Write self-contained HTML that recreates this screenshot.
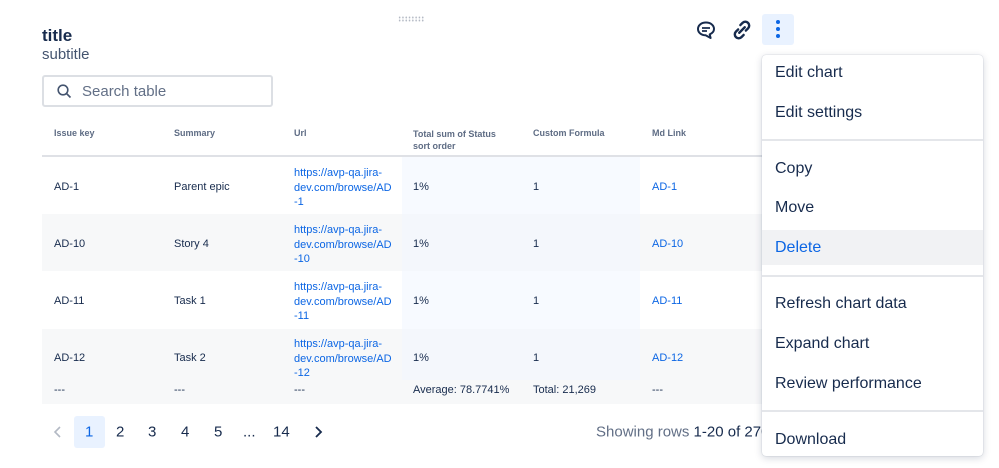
<!DOCTYPE html>
<html><head><style>
*{box-sizing:border-box;margin:0;padding:0}
body{width:999px;height:468px;overflow:hidden;background:#fff;font-family:"Liberation Sans",sans-serif;color:#172b4d;position:relative}
.abs{position:absolute}
.t{font-size:11px;color:#172b4d}
.h{font-size:9px;color:#5e6c84;font-weight:bold}
.link{color:#0c66e4}
.row{position:absolute;left:42px;width:740px}
.menu{position:absolute;left:762px;top:55px;width:221px;height:401px;background:#fff;border-radius:4px;box-shadow:0 2px 8px rgba(9,30,66,.18),0 0 1px rgba(9,30,66,.3)}
.mi{position:absolute;left:13px;font-size:16px;color:#172b4d}
.div{position:absolute;left:0;right:0;height:2px;background:#e4e6ea}
.pg{position:absolute;top:432px;font-size:15px;color:#172b4d;transform:translateY(-50%)}
</style></head><body>
<div class="abs" style="left:398px;top:16px;width:26px;height:6px;background-image:radial-gradient(circle,#b3b9c4 0.8px,transparent 1px);background-size:3.3px 3px"></div>
<div class="abs" style="left:42px;top:26px;font-size:17px;font-weight:bold">title</div>
<div class="abs" style="left:42px;top:46px;font-size:15px;color:#44546f">subtitle</div>
<div class="abs" style="left:42px;top:75px;width:231px;height:32px;border:2px solid #dcdfe4;border-radius:3px"></div>
<svg class="abs" style="left:57px;top:84px" width="15" height="15" viewBox="0 0 15 15"><circle cx="6" cy="6" r="4.8" fill="none" stroke="#44546f" stroke-width="1.6"/><path d="M9.5 9.5L13.5 13.5" stroke="#44546f" stroke-width="1.6"/></svg>
<div class="abs" style="left:82px;top:83px;font-size:15px;color:#626f86">Search table</div>

<div class="abs" style="left:402px;top:157px;width:238px;height:223px;background:#f7faff"></div>
<div class="row" style="top:214px;height:57px;background:#f7f8f9"></div>
<div class="row" style="top:329px;height:51px;background:#f7f8f9"></div>
<div class="row" style="top:380px;height:24px;background:#f7f8f9"></div>
<div class="abs" style="left:402px;top:214px;width:238px;height:57px;background:#f4f7fc"></div>
<div class="abs" style="left:402px;top:329px;width:238px;height:51px;background:#f4f7fc"></div>
<div class="row" style="top:155px;height:2px;background:#dfe1e6"></div>

<div class="abs h" style="left:54px;top:128px">Issue key</div>
<div class="abs h" style="left:174px;top:128px">Summary</div>
<div class="abs h" style="left:294px;top:128px">Url</div>
<div class="abs h" style="left:413px;top:128px;line-height:12px">Total sum of Status<br>sort order</div>
<div class="abs h" style="left:533px;top:128px">Custom Formula</div>
<div class="abs h" style="left:652px;top:128px">Md Link</div>

<div class="abs t" style="left:54px;top:181px">AD-1</div><div class="abs t" style="left:174px;top:181px">Parent epic</div>
<div class="abs t link" style="left:294px;top:166px;line-height:14.5px">https://avp-qa.jira-<br>dev.com/browse/AD<br>-1</div>
<div class="abs t" style="left:413px;top:181px">1%</div><div class="abs t" style="left:533px;top:181px">1</div><div class="abs t link" style="left:652px;top:181px">AD-1</div>

<div class="abs t" style="left:54px;top:238px">AD-10</div><div class="abs t" style="left:174px;top:238px">Story 4</div>
<div class="abs t link" style="left:294px;top:223px;line-height:14.5px">https://avp-qa.jira-<br>dev.com/browse/AD<br>-10</div>
<div class="abs t" style="left:413px;top:238px">1%</div><div class="abs t" style="left:533px;top:238px">1</div><div class="abs t link" style="left:652px;top:238px">AD-10</div>

<div class="abs t" style="left:54px;top:295px">AD-11</div><div class="abs t" style="left:174px;top:295px">Task 1</div>
<div class="abs t link" style="left:294px;top:280px;line-height:14.5px">https://avp-qa.jira-<br>dev.com/browse/AD<br>-11</div>
<div class="abs t" style="left:413px;top:295px">1%</div><div class="abs t" style="left:533px;top:295px">1</div><div class="abs t link" style="left:652px;top:295px">AD-11</div>

<div class="abs t" style="left:54px;top:352px">AD-12</div><div class="abs t" style="left:174px;top:352px">Task 2</div>
<div class="abs t link" style="left:294px;top:337px;line-height:14.5px">https://avp-qa.jira-<br>dev.com/browse/AD<br>-12</div>
<div class="abs t" style="left:413px;top:352px">1%</div><div class="abs t" style="left:533px;top:352px">1</div><div class="abs t link" style="left:652px;top:352px">AD-12</div>

<div class="abs t" style="left:54px;top:384px">---</div><div class="abs t" style="left:174px;top:384px">---</div><div class="abs t" style="left:294px;top:384px">---</div>
<div class="abs t" style="left:413px;top:384px">Average: 78.7741%</div><div class="abs t" style="left:533px;top:384px">Total: 21,269</div><div class="abs t" style="left:652px;top:384px">---</div>

<svg class="abs" style="left:53px;top:425px" width="10" height="14" viewBox="0 0 10 14"><path d="M7 2L2 7L7 12" fill="none" stroke="#b3b9c4" stroke-width="1.6"/></svg>
<div class="abs" style="left:74px;top:416px;width:31px;height:32px;background:#e9f2ff;border-radius:3px"></div>
<div class="pg" style="left:85px;color:#0c66e4">1</div>
<div class="pg" style="left:116px">2</div><div class="pg" style="left:148px">3</div><div class="pg" style="left:181px">4</div><div class="pg" style="left:214px">5</div>
<div class="pg" style="left:243px">...</div><div class="pg" style="left:273px">14</div>
<svg class="abs" style="left:313px;top:425px" width="10" height="14" viewBox="0 0 10 14"><path d="M3 2L8 7L3 12" fill="none" stroke="#172b4d" stroke-width="1.8"/></svg>
<div class="pg" style="left:596px;color:#626f86">Showing rows <span style="color:#172b4d">1-20 of 270</span></div>

<svg class="abs" style="left:696px;top:20px" width="20" height="20" viewBox="0 0 20 20"><path d="M10 2.5C5.3 2.5 2 5.3 2 9c0 3.6 3.3 6.3 7.6 6.3l5 2.7-.9-3.6C16.3 13.2 18 11.3 18 9c0-3.7-3.4-6.5-8-6.5z" fill="none" stroke="#172b4d" stroke-width="2" stroke-linejoin="round"/><path d="M6 8h8M6 11h5" stroke="#172b4d" stroke-width="1.8"/></svg>
<svg class="abs" style="left:731px;top:19px" width="22" height="22" viewBox="0 0 20 20"><path d="M7.5 12.5l5-5M8.5 5.5l2-2a3.5 3.5 0 0 1 5 5l-2 2M11.5 14.5l-2 2a3.5 3.5 0 0 1-5-5l2-2" fill="none" stroke="#172b4d" stroke-width="2.2" stroke-linecap="round"/></svg>
<div class="abs" style="left:762px;top:14px;width:32px;height:31px;background:#e9f2ff;border-radius:3px"></div>
<div class="abs" style="left:776px;top:20px;width:4px;height:4px;border-radius:50%;background:#0c66e4;box-shadow:0 7px 0 #0c66e4,0 14px 0 #0c66e4"></div>

<div class="menu">
<div class="mi" style="top:9px">Edit chart</div>
<div class="mi" style="top:49px">Edit settings</div>
<div class="div" style="top:84px"></div>
<div class="mi" style="top:105px">Copy</div>
<div class="mi" style="top:144px">Move</div>
<div class="abs" style="left:0;right:0;top:175px;height:35px;background:#f1f2f4"></div>
<div class="mi" style="top:184px;color:#0c66e4">Delete</div>
<div class="div" style="top:220px"></div>
<div class="mi" style="top:240px">Refresh chart data</div>
<div class="mi" style="top:280px">Expand chart</div>
<div class="mi" style="top:320px">Review performance</div>
<div class="div" style="top:355px"></div>
<div class="mi" style="top:376px">Download</div>
</div>
</body></html>
